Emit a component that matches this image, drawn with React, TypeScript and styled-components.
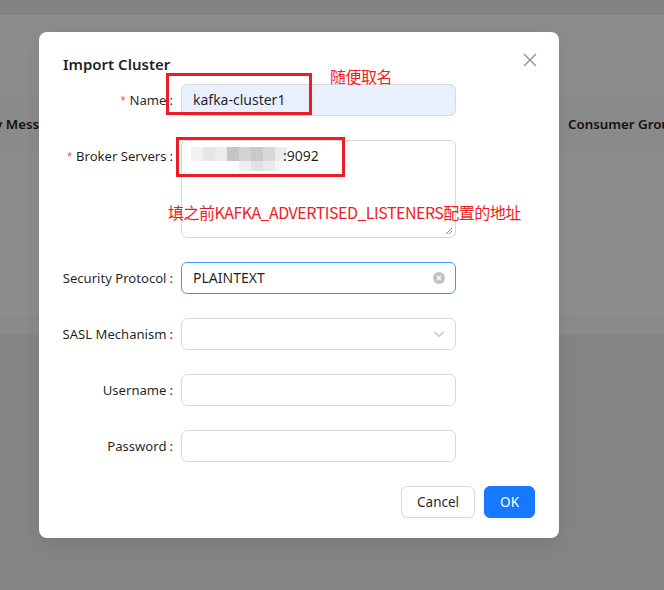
import React from "react";
import styled, { createGlobalStyle } from "styled-components";

const GlobalStyle = createGlobalStyle`
  html, body {
    margin: 0;
    padding: 0;
    background: #848484;
  }
  body {
    font-family: "Noto Sans", "Noto Sans CJK SC", sans-serif;
    font-size: 14px;
    color: rgba(0, 0, 0, 0.88);
  }
`;

const Page = styled.div`
  position: relative;
  width: 664px;
  height: 590px;
  overflow: hidden;
  background: #848484;
  display: flex;
  flex-direction: column;
`;

const TopBand = styled.div`
  height: 15px;
  background: #838383;
`;

const Card = styled.div`
  height: 320px;
  background: #8c8c8c;
  display: flex;
  flex-direction: column;
`;

const CardHead = styled.div`
  height: 82px;
`;

const HeaderRow = styled.div`
  height: 53px;
  background: #8a8a8a;
  border-bottom: 1px solid #868686;
  display: flex;
  align-items: center;
  margin-left: -34px;
`;

const HeaderCell = styled.div<{ $w: number }>`
  width: ${(p) => p.$w}px;
  flex: none;
  white-space: nowrap;
  font-size: 13.3px;
  font-weight: 600;
  color: #121212;
`;

const TableBody = styled.div`
  flex: 1;
  border-bottom: 1px solid #868686;
`;

const CardFoot = styled.div`
  height: 17px;
  background: #8a8a8a;
`;

const Modal = styled.div`
  position: absolute;
  left: 39px;
  top: 32px;
  width: 520px;
  box-sizing: border-box;
  padding: 20px 24px;
  background: #fff;
  border-radius: 8px;
  box-shadow: 0 6px 16px rgba(0, 0, 0, 0.08);
`;

const TitleBar = styled.div`
  display: flex;
  justify-content: space-between;
  align-items: center;
  height: 24px;
  margin-bottom: 8px;
`;

const Title = styled.div`
  font-size: 15px;
  font-weight: 600;
  line-height: 24px;
  color: rgba(0, 0, 0, 0.88);
`;

const CloseButton = styled.button`
  border: 0;
  background: none;
  padding: 0;
  margin-right: -3px;
  margin-top: -8px;
  width: 16px;
  height: 16px;
  display: flex;
  align-items: center;
  justify-content: center;
  cursor: pointer;
`;

const Form = styled.div`
  display: flex;
  flex-direction: column;
  gap: 24px;
`;

const Row = styled.div`
  display: flex;
  align-items: flex-start;
`;

const Label = styled.label<{ $required?: boolean }>`
  width: 118px;
  flex: none;
  height: 32px;
  display: flex;
  align-items: center;
  justify-content: flex-end;
  white-space: nowrap;
  font-size: 13.1px;
  color: rgba(0, 0, 0, 0.88);

  &::before {
    content: ${(p) => (p.$required ? '"*"' : '""')};
    color: #ff4d4f;
    margin-right: 4px;
    font-family: "Liberation Sans", sans-serif;
  }

  &::after {
    content: ":";
    margin: 0 8px 0 3px;
  }
`;

const Field = styled.div<{ $focus?: boolean; $fill?: string; $h?: number }>`
  position: relative;
  width: 275px;
  height: ${(p) => p.$h ?? 32}px;
  box-sizing: border-box;
  border: 1px solid ${(p) => (p.$focus ? "#4096ff" : "#d9d9d9")};
  border-radius: 6px;
  background: ${(p) => p.$fill ?? "#fff"};
  padding: 4px 11px;
  display: flex;
  align-items: ${(p) => (p.$h ? "flex-start" : "center")};
  line-height: 22px;
`;

const Value = styled.span`
  flex: 1;
  color: rgba(0, 0, 0, 0.88);
`;

const Suffix = styled.span`
  display: flex;
  align-items: center;
  margin-right: -1px;
`;

const Grip = styled.svg`
  position: absolute;
  right: 2px;
  bottom: 2px;
`;

const Footer = styled.div`
  display: flex;
  justify-content: flex-end;
  gap: 9px;
  margin-top: 24px;
`;

const Button = styled.button<{ $primary?: boolean }>`
  height: 32px;
  padding: 0 15px;
  border-radius: 6px;
  font-family: inherit;
  font-size: 13.5px;
  border: 1px solid ${(p) => (p.$primary ? "#1677ff" : "#d9d9d9")};
  background: ${(p) => (p.$primary ? "#1677ff" : "#fff")};
  color: ${(p) => (p.$primary ? "#fff" : "rgba(0,0,0,0.88)")};
  box-shadow: 0 2px 0 rgba(0, 0, 0, 0.02);
`;

const MarkBox = styled.div<{ $l: number; $t: number; $w: number; $h: number }>`
  position: absolute;
  left: ${(p) => p.$l}px;
  top: ${(p) => p.$t}px;
  width: ${(p) => p.$w}px;
  height: ${(p) => p.$h}px;
  box-sizing: border-box;
  border: 3px solid #ee1c25;
  pointer-events: none;
`;

const MarkText = styled.div<{ $l: number; $t: number }>`
  position: absolute;
  left: ${(p) => p.$l}px;
  top: ${(p) => p.$t}px;
  font-family: "Noto Sans CJK SC", sans-serif;
  font-size: 16px;
  line-height: 20px;
  letter-spacing: -0.5px;
  color: #ee1c25;
  white-space: nowrap;
`;

const Mosaic = () => (
  <svg width="98" height="26" viewBox="0 0 98 26" style={{ marginLeft: -2, marginTop: 2 }}>
    <rect x="0" y="0" width="12" height="14" fill="#f1f1f1" />
    <rect x="12" y="0" width="12" height="14" fill="#e6e6e6" />
    <rect x="24" y="0" width="12" height="14" fill="#ececec" />
    <rect x="36" y="0" width="12" height="14" fill="#c4c4c4" />
    <rect x="48" y="0" width="12" height="14" fill="#d2d2d2" />
    <rect x="60" y="0" width="12" height="14" fill="#c9c9c9" />
    <rect x="72" y="0" width="12" height="14" fill="#d8d8d8" />
    <rect x="84" y="0" width="12" height="14" fill="#ebebeb" />
    <rect x="48" y="14" width="12" height="10" fill="#efefef" />
    <rect x="60" y="14" width="12" height="10" fill="#e2e2e2" />
    <rect x="72" y="14" width="12" height="10" fill="#e9e9e9" />
    <rect x="84" y="14" width="6" height="10" fill="#f4f4f4" />
  </svg>
);

const App = () => {
  return (
    <>
      <GlobalStyle />
      <Page>
        <TopBand />
        <Card>
          <CardHead />
          <HeaderRow>
            <HeaderCell $w={602}>Delay Messages</HeaderCell>
            <HeaderCell $w={130}>Consumer Groups</HeaderCell>
          </HeaderRow>
          <TableBody />
          <CardFoot />
        </Card>

        <Modal>
          <TitleBar>
            <Title>Import Cluster</Title>
            <CloseButton aria-label="close">
              <svg width="14" height="14" viewBox="0 0 14 14">
                <path d="M1 1L13 13M13 1L1 13" stroke="#8c8c8c" strokeWidth="1.3" />
              </svg>
            </CloseButton>
          </TitleBar>

          <Form>
            <Row>
              <Label $required>Name</Label>
              <Field $fill="#e8f0fe">
                <Value>kafka-cluster1</Value>
              </Field>
            </Row>
            <Row>
              <Label $required>Broker Servers</Label>
              <Field $h={98}>
                <Mosaic />
                <Value style={{ marginLeft: -6 }}>:9092</Value>
                <Grip width="8" height="8" viewBox="0 0 8 8">
                  <path d="M7 1L1 7M7 4L4 7" stroke="#8a8a8a" strokeWidth="1" />
                </Grip>
              </Field>
            </Row>
            <Row>
              <Label>Security Protocol</Label>
              <Field $focus>
                <Value>PLAINTEXT</Value>
                <Suffix>
                  <svg width="12" height="12" viewBox="0 0 12 12">
                    <circle cx="6" cy="6" r="6" fill="#c2c2c2" />
                    <path d="M4 4L8 8M8 4L4 8" stroke="#fff" strokeWidth="1.2" />
                  </svg>
                </Suffix>
              </Field>
            </Row>
            <Row>
              <Label>SASL Mechanism</Label>
              <Field>
                <Value />
                <Suffix>
                  <svg width="12" height="12" viewBox="0 0 12 12">
                    <path d="M1.5 4L6 8.5L10.5 4" stroke="#bfbfbf" strokeWidth="1.1" fill="none" />
                  </svg>
                </Suffix>
              </Field>
            </Row>
            <Row>
              <Label>Username</Label>
              <Field />
            </Row>
            <Row>
              <Label>Password</Label>
              <Field />
            </Row>
          </Form>

          <Footer>
            <Button>Cancel</Button>
            <Button $primary>OK</Button>
          </Footer>

          <MarkBox $l={127} $t={41} $w={146} $h={42} />
          <MarkText $l={291} $t={34}>随便取名</MarkText>
          <MarkBox $l={137} $t={105} $w={169} $h={40} />
          <MarkText $l={129} $t={170}>填之前KAFKA_ADVERTISED_LISTENERS配置的地址</MarkText>
        </Modal>
      </Page>
    </>
  );
};

export default App;
